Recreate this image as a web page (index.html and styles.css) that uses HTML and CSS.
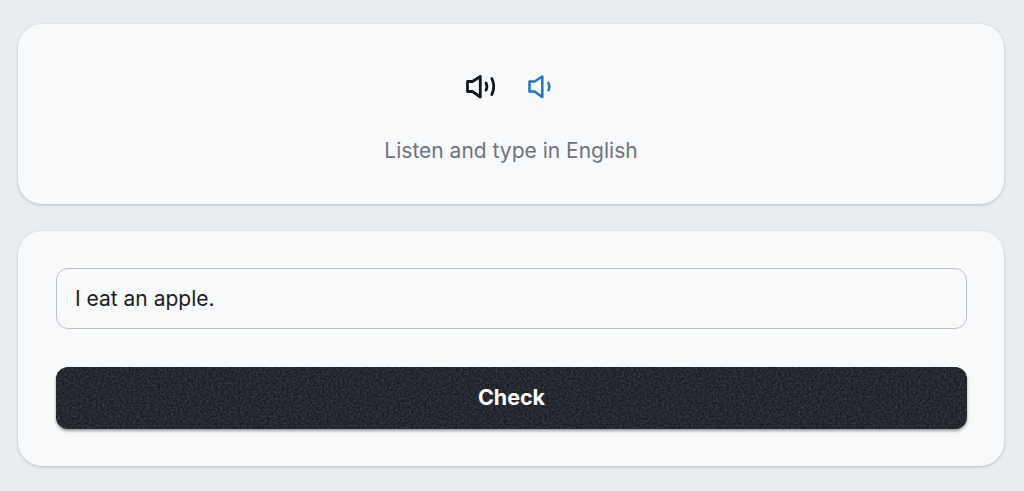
FILE: index.html
```html
<!DOCTYPE html>
<html lang="en">
<head>
<meta charset="utf-8">
<title>Listen and type</title>
<link rel="stylesheet" href="styles.css">
</head>
<body>
<main class="page">
  <section class="card prompt">
    <div class="audio-row">
      <button class="icon-btn icon-dark" type="button" aria-label="Play">
        <svg viewBox="0 0 30 24" width="30" height="24" fill="none" stroke="currentColor" stroke-width="2.800" stroke-linecap="round" stroke-linejoin="round"><path d="M2.500 6.500v10h5l7.800 5.500V1.500L7.500 6.500z"/><path d="M21 8c1.200 2.300 1.200 4.900 0 7.200"/><path d="M26.800 3.500c2.400 5 2.400 11 0 16"/></svg>
      </button>
      <button class="icon-btn icon-blue" type="button" aria-label="Play slowly">
        <svg viewBox="0 0 30 24" width="30" height="24" fill="none" stroke="currentColor" stroke-width="2.500" stroke-linecap="round" stroke-linejoin="round"><path d="M2.500 6.500v10h5l7.800 5.500V1.500L7.500 6.500z"/><path d="M21.500 8c1 2.300 1 5 0 7.200"/></svg>
      </button>
    </div>
    <p class="hint">Listen and type in English</p>
  </section>
  <section class="card answer">
    <div class="field">I eat an apple.</div>
    <button class="check" type="button">
      <svg class="grain" aria-hidden="true" width="100%" height="100%"><filter id="noise"><feTurbulence type="fractalNoise" baseFrequency="0.45" numOctaves="2" seed="4"/><feColorMatrix values="0 0 0 0 1  0 0 0 0 1  0 0 0 0 1  0.5 0 0 0 -0.14"/></filter><rect width="100%" height="100%" filter="url(#noise)"/></svg>
      <span class="check-label">Check</span>
    </button>
  </section>
</main>
</body>
</html>
```
FILE: styles.css
```css
* { box-sizing: border-box; }
html, body { margin: 0; height: 100%; }
body {
  background: #e9edf0;
  font-family: "Inter", "Open Sans", sans-serif;
  overflow: hidden;
}
.page {
  display: flex;
  flex-direction: column;
  gap: 27px;
  padding: 24px 20px 0 18px;
}
.card {
  background: #f8f9fb;
  border-radius: 24px;
  box-shadow: 0 1px 3px rgba(60, 70, 80, .28);
}
.prompt {
  height: 180px;
  display: flex;
  flex-direction: column;
  align-items: center;
  padding-top: 51px;
}
.audio-row { display: flex; gap: 32px; height: 24px; }
.icon-btn {
  width: 30px;
  height: 24px;
  padding: 0;
  border: 0;
  background: none;
  display: block;
}
.icon-btn svg { display: block; }
.icon-dark { color: #14181d; }
.icon-blue { color: #1c77c3; }
.hint {
  margin: 38px 0 0;
  font-size: 21px;
  line-height: 28px;
  color: #6c757d;
}
.answer {
  height: 235px;
  padding: 37px 37px 0 38px;
  display: flex;
  flex-direction: column;
  gap: 38px;
}
.field {
  height: 61px;
  border: 1px solid #bcbfc4;
  border-radius: 12px;
  padding: 0 18px;
  display: flex;
  align-items: center;
  font-size: 21px;
  color: #1b1f24;
}
.check {
  position: relative;
  height: 62px;
  border: 0;
  border-radius: 12px;
  background: #181d24;
  box-shadow: 0 2px 3px rgba(30, 36, 44, .45);
  overflow: hidden;
  color: #fff;
  font: 700 21.500px "Inter", "Open Sans", sans-serif;
}
.grain { position: absolute; left: 0; top: 0; opacity: .5; }
.check-label { position: relative; top: -1px; }
```
